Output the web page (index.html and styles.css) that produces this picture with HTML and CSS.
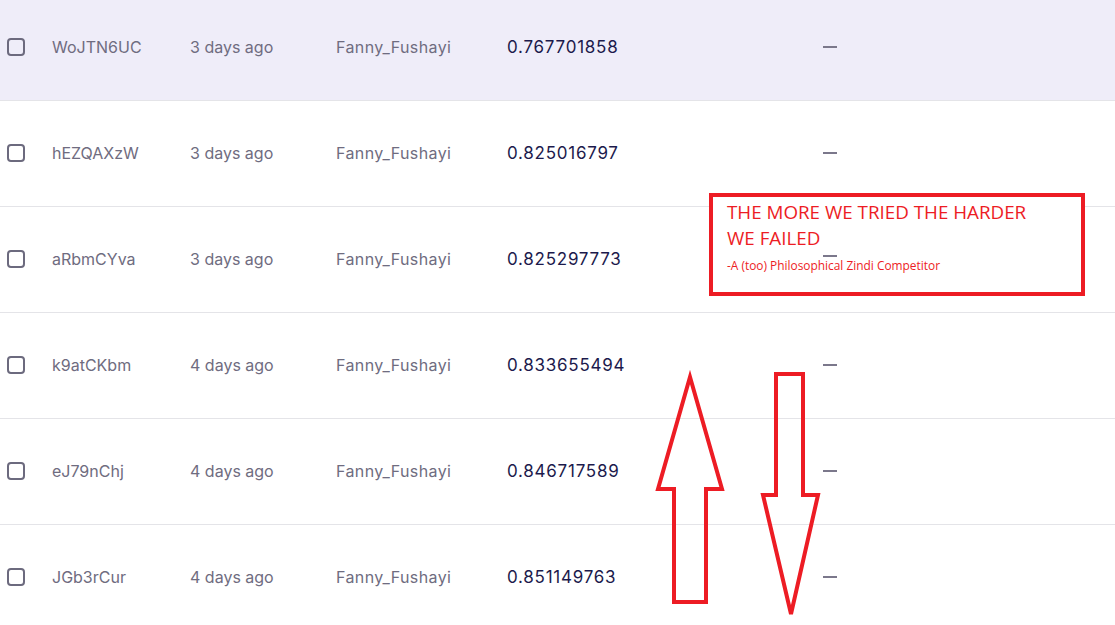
FILE: index.html
```html
<!DOCTYPE html>
<html lang="en">
<head>
    <meta charset="UTF-8">
    <meta name="viewport" content="width=device-width, initial-scale=1.0">
    <title>Submissions</title>
    <link rel="stylesheet" href="styles.css">
</head>
<body>
    <div class="submissions">
        <div class="row selected">
            <span class="check"></span>
            <span class="cell id">WoJTN6UC</span>
            <span class="cell date">3 days ago</span>
            <span class="cell user">Fanny_Fushayi</span>
            <span class="cell score">0.767701858</span>
            <span class="dash"></span>
        </div>
        <div class="row">
            <span class="check"></span>
            <span class="cell id">hEZQAXzW</span>
            <span class="cell date">3 days ago</span>
            <span class="cell user">Fanny_Fushayi</span>
            <span class="cell score">0.825016797</span>
            <span class="dash"></span>
        </div>
        <div class="row">
            <span class="check"></span>
            <span class="cell id">aRbmCYva</span>
            <span class="cell date">3 days ago</span>
            <span class="cell user">Fanny_Fushayi</span>
            <span class="cell score">0.825297773</span>
            <span class="dash on-top"></span>
        </div>
        <div class="row">
            <span class="check"></span>
            <span class="cell id">k9atCKbm</span>
            <span class="cell date">4 days ago</span>
            <span class="cell user">Fanny_Fushayi</span>
            <span class="cell score">0.833655494</span>
            <span class="dash"></span>
        </div>
        <div class="row">
            <span class="check"></span>
            <span class="cell id">eJ79nChj</span>
            <span class="cell date">4 days ago</span>
            <span class="cell user">Fanny_Fushayi</span>
            <span class="cell score">0.846717589</span>
            <span class="dash"></span>
        </div>
        <div class="row">
            <span class="check"></span>
            <span class="cell id">JGb3rCur</span>
            <span class="cell date">4 days ago</span>
            <span class="cell user">Fanny_Fushayi</span>
            <span class="cell score">0.851149763</span>
            <span class="dash"></span>
        </div>
    </div>

    <!-- scribbled annotations on top of the table -->
    <div class="quote">
        <p class="quote-text">THE MORE WE TRIED THE HARDER<br>WE FAILED</p>
        <p class="quote-author">-A (too) Philosophical Zindi Competitor</p>
    </div>

    <svg class="arrows" width="1115" height="625" viewBox="0 0 1115 625">
        <polygon points="690,377 722,489 706,489 706,602 674,602 674,489 658,489"
                 fill="none" stroke="#ed1c24" stroke-width="4" stroke-linejoin="miter"/>
        <polygon points="776,374 803,374 803,495 818,495 791,614 763,495 776,495"
                 fill="none" stroke="#ed1c24" stroke-width="4" stroke-linejoin="miter"/>
    </svg>
</body>
</html>
```
FILE: styles.css
```css
body {
    margin: 0;
    background: #fff;
    font-family: 'Inter', 'Open Sans', sans-serif;
    overflow: hidden;
    height: 625px;
    position: relative;
}

.submissions {
    margin-top: -5px;
}

.row {
    display: flex;
    align-items: center;
    height: 105px;
    border-bottom: 1px solid #e4e4e8;
    font-size: 16px;
    color: #6f6c80;
}

.row.selected {
    background: #efedf9;
}

.row > * {
    position: relative;
    top: -1px;
}

.check {
    width: 14px;
    height: 14px;
    border: 2px solid #6c6a7e;
    border-radius: 4px;
    margin-left: 7px;
    flex-shrink: 0;
}

.cell {
    white-space: nowrap;
}

.id {
    margin-left: 27px;
    width: 138px;
}

.date {
    width: 146px;
}

.user {
    width: 171px;
    letter-spacing: 0.4px;
}

.score {
    width: 316px;
    color: #1c1a4c;
    font-size: 17px;
    letter-spacing: 0.75px;
}

.dash {
    width: 14px;
    height: 2px;
    background: #7b788b;
}

.row > .dash.on-top {
    top: -4px;
    z-index: 3;
}

.quote {
    position: absolute;
    left: 709px;
    top: 193px;
    width: 368px;
    height: 95px;
    border: 4px solid #ed1c24;
    background: #fff;
    z-index: 2;
    color: #ed1c24;
    font-family: 'Open Sans', sans-serif;
}

.quote-text {
    margin: 2px 0 0 14px;
    font-size: 18.8px;
    line-height: 26px;
}

.quote-author {
    margin: 6px 0 0 14px;
    font-size: 11.9px;
}

.arrows {
    position: absolute;
    left: 0;
    top: 0;
    z-index: 4;
    pointer-events: none;
}
```
